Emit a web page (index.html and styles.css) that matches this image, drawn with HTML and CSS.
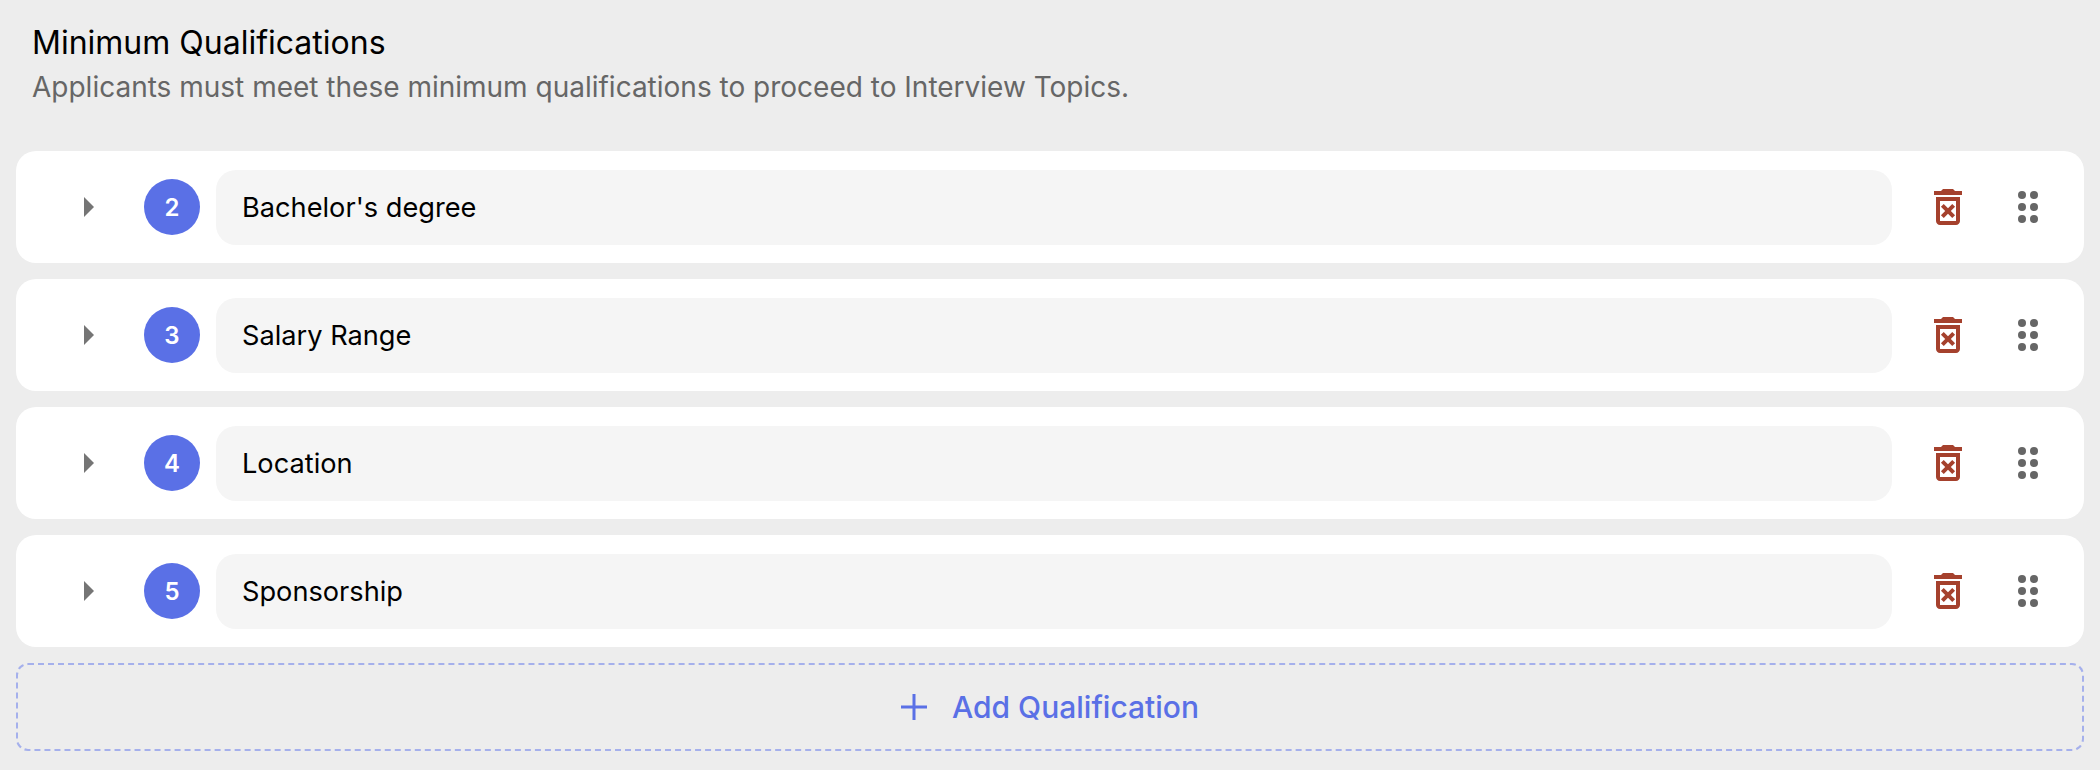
FILE: index.html
```html
<!DOCTYPE html>
<html lang="en">
<head>
<meta charset="utf-8">
<title>Minimum Qualifications</title>
<link rel="stylesheet" href="styles.css">
</head>
<body>
<main class="page">
  <header class="head">
    <h1 class="title">Minimum Qualifications</h1>
    <p class="sub">Applicants must meet these minimum qualifications to proceed to Interview Topics.</p>
  </header>
  <div class="list">
    <div class="card">
      <svg class="ico caret" viewBox="0 0 24 24"><path d="M10 17l5-5-5-5v10z"/></svg>
      <span class="badge">2</span>
      <div class="field">Bachelor's degree</div>
      <svg class="ico trash" viewBox="0 0 24 24"><path d="M14.12 10.47L12 12.59l-2.13-2.12-1.41 1.41L10.59 14l-2.12 2.12 1.41 1.41L12 15.41l2.12 2.12 1.41-1.41L13.41 14l2.12-2.12zM15.5 4l-1-1h-5l-1 1H5v2h14V4zM6 19c0 1.1.9 2 2 2h8c1.1 0 2-.9 2-2V7H6v12zM8 9h8v10H8V9z"/></svg>
      <svg class="ico drag" viewBox="0 0 24 24"><circle cx="9" cy="6" r="2"/><circle cx="15" cy="6" r="2"/><circle cx="9" cy="12" r="2"/><circle cx="15" cy="12" r="2"/><circle cx="9" cy="18" r="2"/><circle cx="15" cy="18" r="2"/></svg>
    </div>
    <div class="card">
      <svg class="ico caret" viewBox="0 0 24 24"><path d="M10 17l5-5-5-5v10z"/></svg>
      <span class="badge">3</span>
      <div class="field">Salary Range</div>
      <svg class="ico trash" viewBox="0 0 24 24"><path d="M14.12 10.47L12 12.59l-2.13-2.12-1.41 1.41L10.59 14l-2.12 2.12 1.41 1.41L12 15.41l2.12 2.12 1.41-1.41L13.41 14l2.12-2.12zM15.5 4l-1-1h-5l-1 1H5v2h14V4zM6 19c0 1.1.9 2 2 2h8c1.1 0 2-.9 2-2V7H6v12zM8 9h8v10H8V9z"/></svg>
      <svg class="ico drag" viewBox="0 0 24 24"><circle cx="9" cy="6" r="2"/><circle cx="15" cy="6" r="2"/><circle cx="9" cy="12" r="2"/><circle cx="15" cy="12" r="2"/><circle cx="9" cy="18" r="2"/><circle cx="15" cy="18" r="2"/></svg>
    </div>
    <div class="card">
      <svg class="ico caret" viewBox="0 0 24 24"><path d="M10 17l5-5-5-5v10z"/></svg>
      <span class="badge">4</span>
      <div class="field">Location</div>
      <svg class="ico trash" viewBox="0 0 24 24"><path d="M14.12 10.47L12 12.59l-2.13-2.12-1.41 1.41L10.59 14l-2.12 2.12 1.41 1.41L12 15.41l2.12 2.12 1.41-1.41L13.41 14l2.12-2.12zM15.5 4l-1-1h-5l-1 1H5v2h14V4zM6 19c0 1.1.9 2 2 2h8c1.1 0 2-.9 2-2V7H6v12zM8 9h8v10H8V9z"/></svg>
      <svg class="ico drag" viewBox="0 0 24 24"><circle cx="9" cy="6" r="2"/><circle cx="15" cy="6" r="2"/><circle cx="9" cy="12" r="2"/><circle cx="15" cy="12" r="2"/><circle cx="9" cy="18" r="2"/><circle cx="15" cy="18" r="2"/></svg>
    </div>
    <div class="card">
      <svg class="ico caret" viewBox="0 0 24 24"><path d="M10 17l5-5-5-5v10z"/></svg>
      <span class="badge">5</span>
      <div class="field">Sponsorship</div>
      <svg class="ico trash" viewBox="0 0 24 24"><path d="M14.12 10.47L12 12.59l-2.13-2.12-1.41 1.41L10.59 14l-2.12 2.12 1.41 1.41L12 15.41l2.12 2.12 1.41-1.41L13.41 14l2.12-2.12zM15.5 4l-1-1h-5l-1 1H5v2h14V4zM6 19c0 1.1.9 2 2 2h8c1.1 0 2-.9 2-2V7H6v12zM8 9h8v10H8V9z"/></svg>
      <svg class="ico drag" viewBox="0 0 24 24"><circle cx="9" cy="6" r="2"/><circle cx="15" cy="6" r="2"/><circle cx="9" cy="12" r="2"/><circle cx="15" cy="12" r="2"/><circle cx="9" cy="18" r="2"/><circle cx="15" cy="18" r="2"/></svg>
    </div>
    <button class="add" type="button">
      <svg class="plus" viewBox="0 0 26 26"><path d="M13 0v26M0 13h26"/></svg>
      <span>Add Qualification</span>
    </button>
  </div>
</main>
</body>
</html>
```
FILE: styles.css
```css
* { box-sizing: border-box; }
html, body { margin: 0; padding: 0; }
body {
  background: #ededed;
  font-family: Inter, "Liberation Sans", sans-serif;
  width: 2100px;
  height: 770px;
  overflow: hidden;
}
.page { padding: 25px 16px 0; }
.head { padding: 0 16px; height: 126px; }
.title {
  margin: 0;
  font-size: 32px;
  line-height: 36px;
  font-weight: 400;
  color: #000;
}
.sub {
  margin: 8px 0 0;
  font-size: 28px;
  line-height: 36px;
  font-weight: 400;
  color: #666;
}
.list { display: flex; flex-direction: column; gap: 16px; }
.card {
  display: flex;
  align-items: center;
  height: 112px;
  padding-left: 48px;
  background: #fff;
  border-radius: 20px;
}
.ico { width: 48px; height: 48px; flex: none; }
.caret { fill: #757575; margin-right: 32px; }
.badge {
  flex: none;
  width: 56px;
  height: 56px;
  border-radius: 50%;
  background: #5a70e6;
  color: #fff;
  font-size: 24px;
  font-weight: 600;
  display: flex;
  align-items: center;
  justify-content: center;
  margin-right: 16px;
}
.field {
  width: 1676px;
  height: 75px;
  padding-left: 26px;
  display: flex;
  align-items: center;
  background: #f5f5f5;
  border-radius: 20px;
  font-size: 27.2px;
  color: #000;
}
.trash { fill: #a5412d; margin-left: 32px; }
.drag { fill: #666; margin-left: 32px; }
.add {
  height: 88px;
  display: flex;
  align-items: center;
  justify-content: center;
  gap: 25px;
  background: transparent;
  border: 2px dashed #a5b0ec;
  border-radius: 12px;
  font-family: inherit;
  font-size: 30px;
  font-weight: 500;
  color: #5a70e6;
  padding: 0;
}
.plus { width: 26px; height: 26px; flex: none; }
.plus path { stroke: #5a70e6; stroke-width: 3; fill: none; }
```
